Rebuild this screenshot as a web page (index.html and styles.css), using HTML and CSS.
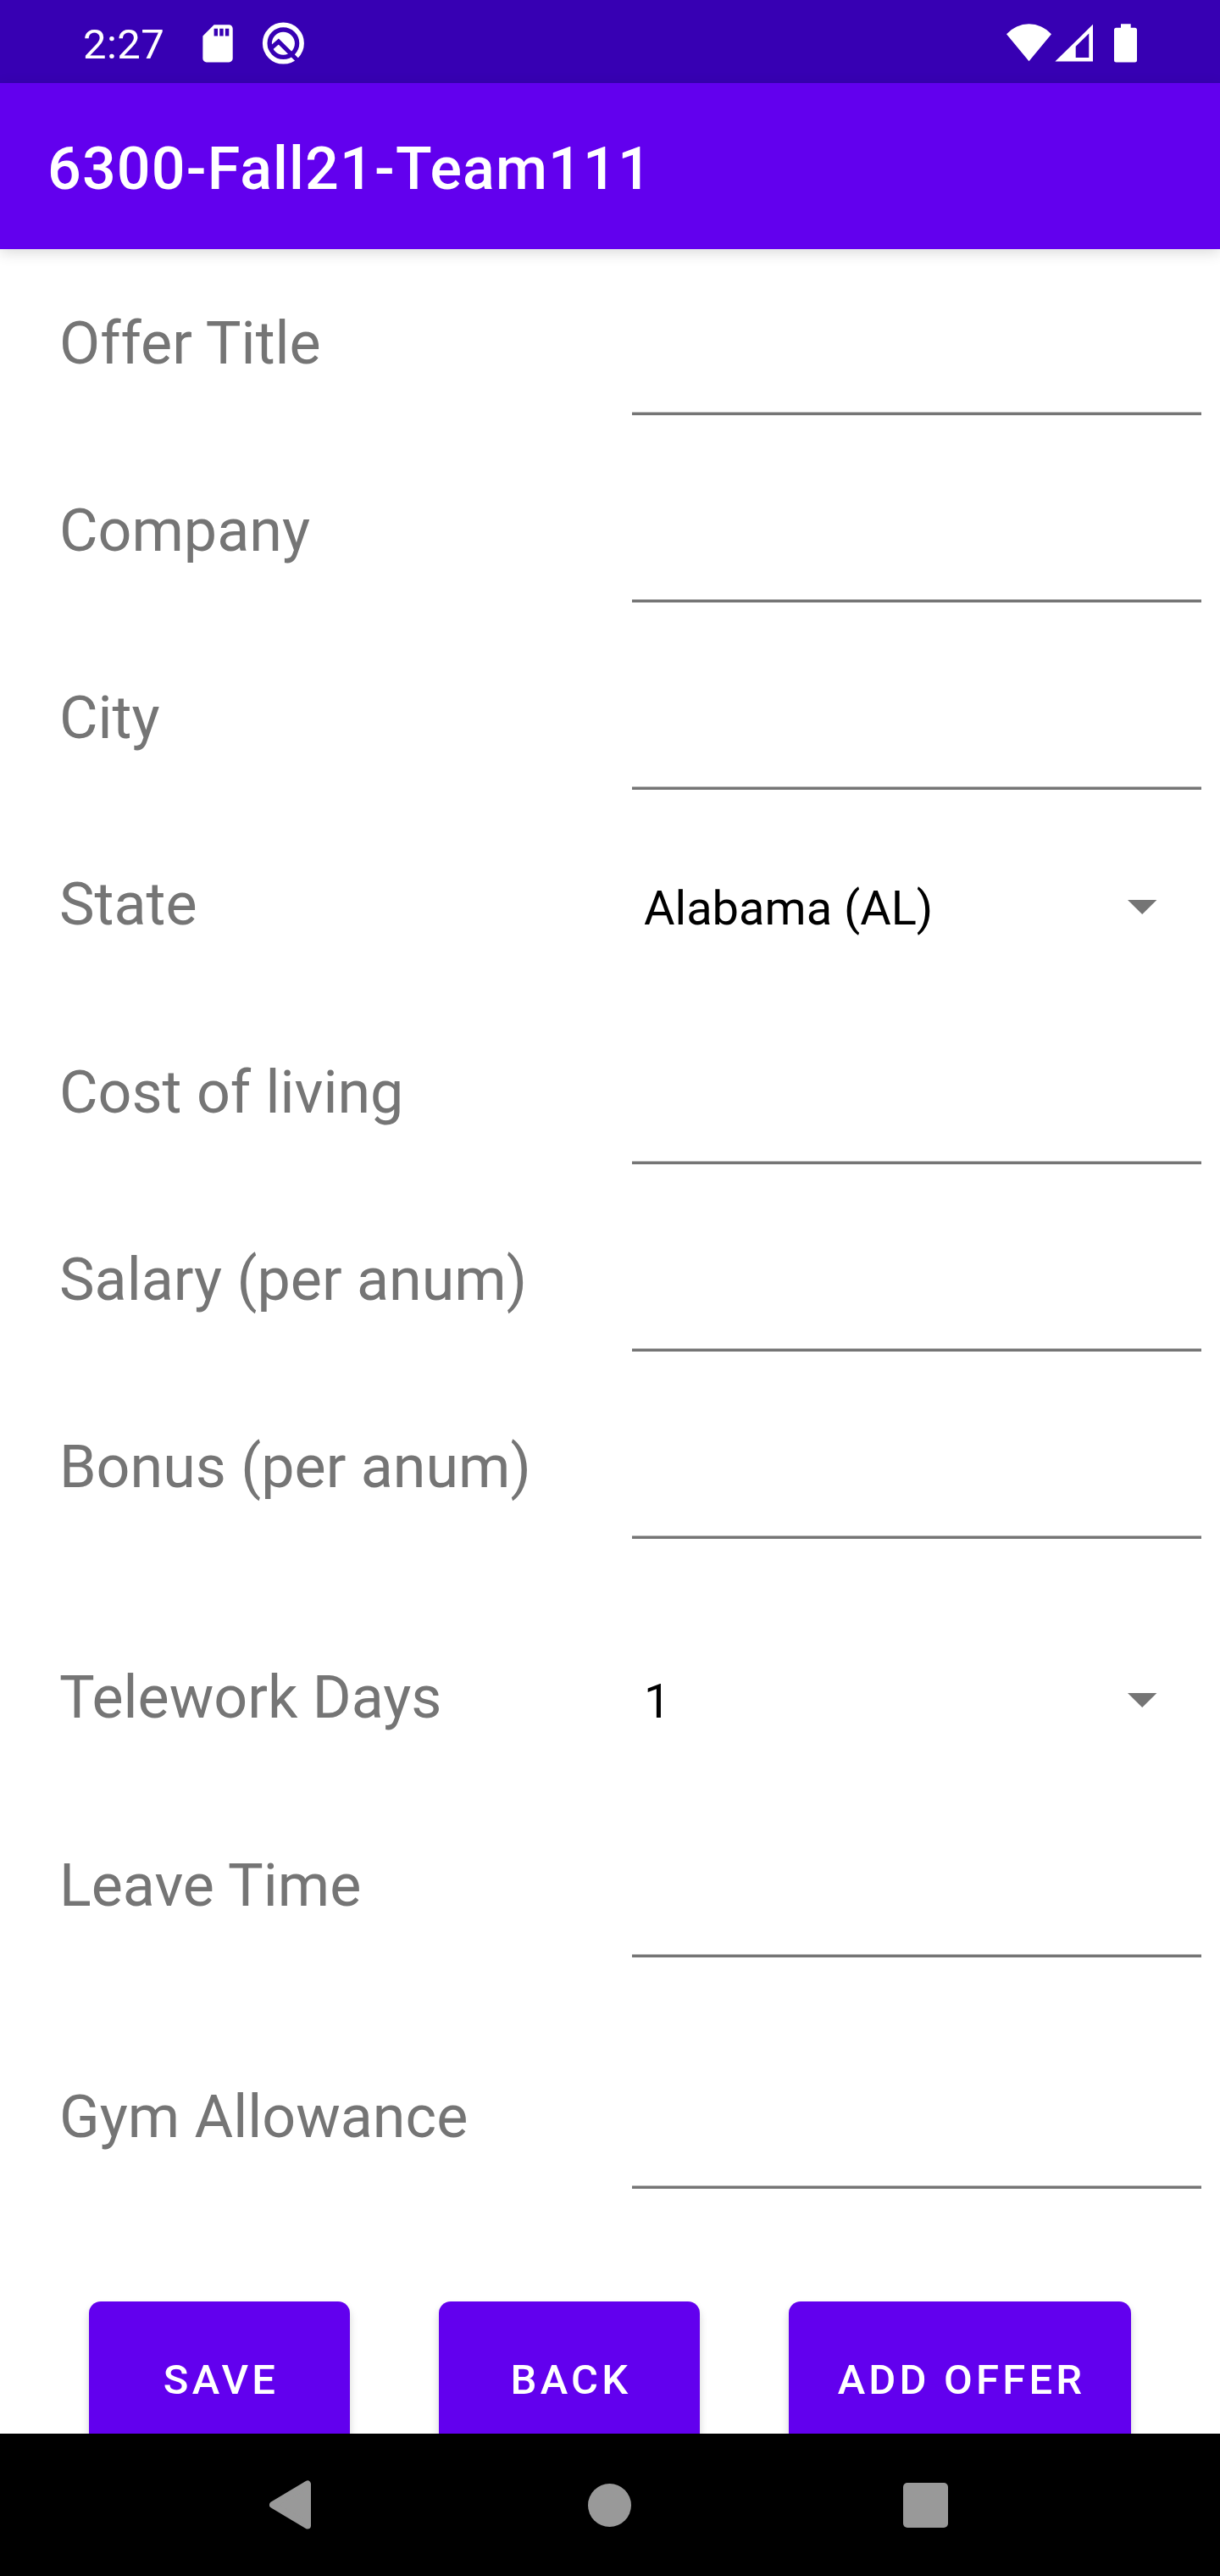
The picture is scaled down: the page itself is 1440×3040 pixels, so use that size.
FILE: index.html
```html
<!DOCTYPE html>
<html lang="en">
<head>
<meta charset="utf-8">
<title>6300-Fall21-Team111</title>
<link rel="stylesheet" href="styles.css">
</head>
<body>
<div class="screen">
  <header class="status-bar">
    <span class="clock">2:27</span>
    <svg class="notification-icons" width="130" height="98" viewBox="230 0 130 98">
      <path fill="#fff" fill-rule="evenodd" transform="translate(230.5 24.9) scale(2.21)" d="M18 2h-8L4.02 8 4 20c0 1.1.9 2 2 2h12c1.1 0 2-.9 2-2V4c0-1.1-.9-2-2-2zm-6 6h-2V4h2v4zm3 0h-2V4h2v4zm3 0h-2V4h2v4z"/>
      <circle cx="334.4" cy="51.1" r="21.7" fill="none" stroke="#fff" stroke-width="5.6"/>
      <circle cx="334.4" cy="51.3" r="13.5" fill="#fff"/>
      <path d="M318 58.5L328.8 49L353 73" fill="none" stroke="#3700b3" stroke-width="5.2"/>
    </svg>
    <svg class="system-icons" width="160" height="98" viewBox="1186 0 160 98" fill="#fff">
      <path d="M1188 40.3A35.4 35.4 0 0 1 1241 40.3L1214.5 72.3z"/>
      <path fill-rule="evenodd" d="M1245.4 72.6H1290V28.8zM1269.7 54.8L1285.3 39.6V68H1269.7z"/>
      <path d="M1323 28.3h11.7v4.4h4.8a2.5 2.5 0 0 1 2.5 2.5v35.8a2.5 2.5 0 0 1-2.5 2.5h-22a2.5 2.5 0 0 1-2.5-2.5V35.2a2.5 2.5 0 0 1 2.5-2.5h5.5z"/>
    </svg>
  </header>
  <div class="app-bar"><h1 class="app-title">6300-Fall21-Team111</h1></div>
  <main class="form">
    <div class="row"><span class="label">Offer Title</span><span class="field"></span></div>
    <div class="row"><span class="label">Company</span><span class="field"></span></div>
    <div class="row"><span class="label">City</span><span class="field"></span></div>
    <div class="row row-spinner"><span class="label">State</span><span class="spinner">Alabama (AL)<svg class="arrow" width="35" height="17" viewBox="0 0 35 17"><path d="M0 0H34.400L17.2 17z"/></svg></span></div>
    <div class="row"><span class="label">Cost of living</span><span class="field"></span></div>
    <div class="row"><span class="label">Salary (per anum)</span><span class="field"></span></div>
    <div class="row"><span class="label">Bonus (per anum)</span><span class="field"></span></div>
    <div class="row row-spinner spaced"><span class="label">Telework Days</span><span class="spinner">1<svg class="arrow" width="35" height="17" viewBox="0 0 35 17"><path d="M0 0H34.400L17.2 17z"/></svg></span></div>
    <div class="row"><span class="label">Leave Time</span><span class="field"></span></div>
    <div class="row spaced"><span class="label">Gym Allowance</span><span class="field"></span></div>
    <div class="actions">
      <button class="button">SAVE</button>
      <button class="button">BACK</button>
      <button class="button button-wide">ADD OFFER</button>
    </div>
  </main>
  <nav class="nav-bar">
    <svg width="49" height="58" viewBox="0 0 49 58"><path d="M4 29L45 4.500V53.500z" fill="#999" stroke="#999" stroke-width="8" stroke-linejoin="round"/></svg>
    <svg width="51" height="51" viewBox="0 0 51 51"><circle cx="25.500" cy="25.500" r="25.500" fill="#999"/></svg>
    <svg width="53" height="53" viewBox="0 0 53 53"><rect width="53" height="53" rx="5" fill="#999"/></svg>
  </nav>
</div>
</body>
</html>
```
FILE: styles.css
```css
* { box-sizing: border-box; }

body {
  margin: 0;
  background: #fff;
  font-family: Roboto, sans-serif;
}

.screen {
  width: 1440px;
  height: 3040px;
  display: flex;
  flex-direction: column;
  overflow: hidden;
}

.status-bar {
  flex: none;
  height: 98px;
  display: flex;
  align-items: center;
  padding: 0 94px 0 98px;
  background: #3700b3;
  color: #fff;
}

.clock {
  width: 132px;
  padding-top: 8px;
  font-size: 49px;
  line-height: 58px;
  letter-spacing: 0.4px;
}

.system-icons { margin-left: auto; }

.app-bar {
  flex: none;
  z-index: 1;
  height: 196px;
  padding: 60px 56px 0;
  background: #6200ee;
  box-shadow: 0 4px 16px rgba(0, 0, 0, 0.15);
}

.app-title {
  margin: 0;
  color: #fff;
  font-size: 70px;
  font-weight: 500;
  line-height: 82px;
  letter-spacing: 1.15px;
}

.form {
  flex: 1;
  min-height: 0;
  overflow: hidden;
}

.row {
  height: 221px;
  display: grid;
  grid-template-columns: 676px 672px;
  padding: 70px 22px 0 70px;
}

.row-spinner { padding-top: 69px; }
.spaced { margin-top: 52px; }

.label {
  color: #757575;
  font-size: 70px;
  line-height: 82px;
  white-space: nowrap;
}

.field {
  height: 126px;
  border-bottom: 3px solid #757575;
  background: linear-gradient(#bababa, #bababa) bottom / 100% 1px no-repeat;
}

.spinner {
  display: flex;
  justify-content: space-between;
  padding: 13px 52px 0 14px;
  color: #000;
  font-size: 56px;
  line-height: 66px;
}

.arrow {
  margin-top: 23px;
  fill: #757575;
}

.actions {
  display: flex;
  gap: 105px;
  padding: 108px 105px 0;
}

.button {
  width: 308px;
  height: 185px;
  padding: 0 0 0 4px;
  border: 0;
  border-radius: 14px;
  background: #6200ee;
  box-shadow: 0 6px 10px rgba(0, 0, 0, 0.18);
  color: #fff;
  font: 500 49px/58px Roboto, sans-serif;
  letter-spacing: 4.2px;
}

.button-wide { width: 404px; }

.nav-bar {
  flex: none;
  z-index: 1;
  height: 168px;
  display: flex;
  align-items: center;
  gap: 320.500px;
  padding-left: 318px;
  background: #000;
}

.nav-bar svg:first-child { margin-right: 6.500px; }
```
